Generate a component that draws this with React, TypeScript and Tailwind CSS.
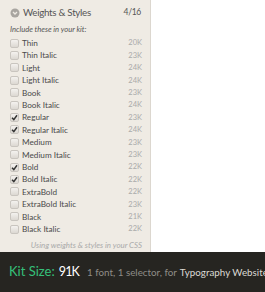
import React from "react";

const rows: [string, string, boolean][] = [
  ["Thin", "20K", false],
  ["Thin Italic", "23K", false],
  ["Light", "24K", false],
  ["Light Italic", "24K", false],
  ["Book", "23K", false],
  ["Book Italic", "24K", false],
  ["Regular", "23K", true],
  ["Regular Italic", "24K", true],
  ["Medium", "23K", false],
  ["Medium Italic", "23K", false],
  ["Bold", "22K", true],
  ["Bold Italic", "22K", true],
  ["ExtraBold", "22K", false],
  ["ExtraBold Italic", "23K", false],
  ["Black", "21K", false],
  ["Black Italic", "22K", false],
];

function Box({ checked }: { checked: boolean }) {
  return (
    <div className="shrink-0 w-[9px] h-[9px] rounded-[2px] border border-[#c9c5bf] bg-gradient-to-b from-[#f4f2ef] to-[#dcd8d2] flex items-center justify-center">
      {checked && (
        <svg width="7" height="7" viewBox="0 0 7 7">
          <path d="M1 3.8 L2.8 5.6 L6 1.2" stroke="#333" strokeWidth="1.5" fill="none" />
        </svg>
      )}
    </div>
  );
}

export default function App() {
  return (
    <div className="w-[265px] h-[292px] bg-white overflow-hidden flex flex-col" style={{ fontFamily: "Lato, 'Open Sans', sans-serif" }}>
      <div className="h-[252px] flex shrink-0">
        <div className="w-[151px] shrink-0 h-full bg-[#efebe4] border-r border-[#dcd7cf] pl-[10px] pr-[8px]">
          <div className="h-[24px] pt-[1px] flex items-center whitespace-nowrap">
            <svg width="10" height="10" viewBox="0 0 10 10" className="mr-[3px] shrink-0">
              <circle cx="5" cy="5" r="4.5" fill="#a8a5a0" />
              <path d="M3 4 L5 6 L7 4" stroke="#efebe4" strokeWidth="1.3" fill="none" />
            </svg>
            <span className="text-[9.8px] tracking-[-0.3px] text-[#555] leading-none">Weights &amp; Styles</span>
            <span className="ml-auto text-[8.5px] tracking-[-0.3px] text-[#555] pr-[1px]">4/16</span>
          </div>
          <div className="h-[11px] leading-[11px] text-[7.6px] italic text-[#555] whitespace-nowrap">Include these in your kit:</div>
          <div className="mt-[2px]">
            {rows.map(([name, size, checked]) => (
              <div key={name} className="h-[12.4px] flex items-center whitespace-nowrap">
                <Box checked={checked} />
                <span className="ml-[3px] text-[8.2px] text-[#4a4a4a] leading-none">{name}</span>
                <span className="ml-auto text-[7.5px] text-[#aaa] leading-none">{size}</span>
              </div>
            ))}
          </div>
          <div className="mt-[5px] h-[10px] leading-[10px] text-[7.9px] italic text-[#aaa] text-right whitespace-nowrap">
            Using weights &amp; styles in your CSS
          </div>
        </div>
        <div className="flex-1 bg-white" />
      </div>
      <div className="h-[40px] bg-[#262521] flex items-center pl-[9px] whitespace-nowrap">
        <span className="text-[13px] text-[#35c07a]">Kit Size:</span>
        <span className="ml-[4px] text-[12.5px] tracking-[-0.8px] text-white">91K</span>
        <span className="ml-[8px] text-[9.8px] text-[#8f8d88]">1 font, 1 selector, for</span>
        <span className="ml-[3px] text-[9.8px] text-[#dcdad4]">Typography Website</span>
      </div>
    </div>
  );
}
